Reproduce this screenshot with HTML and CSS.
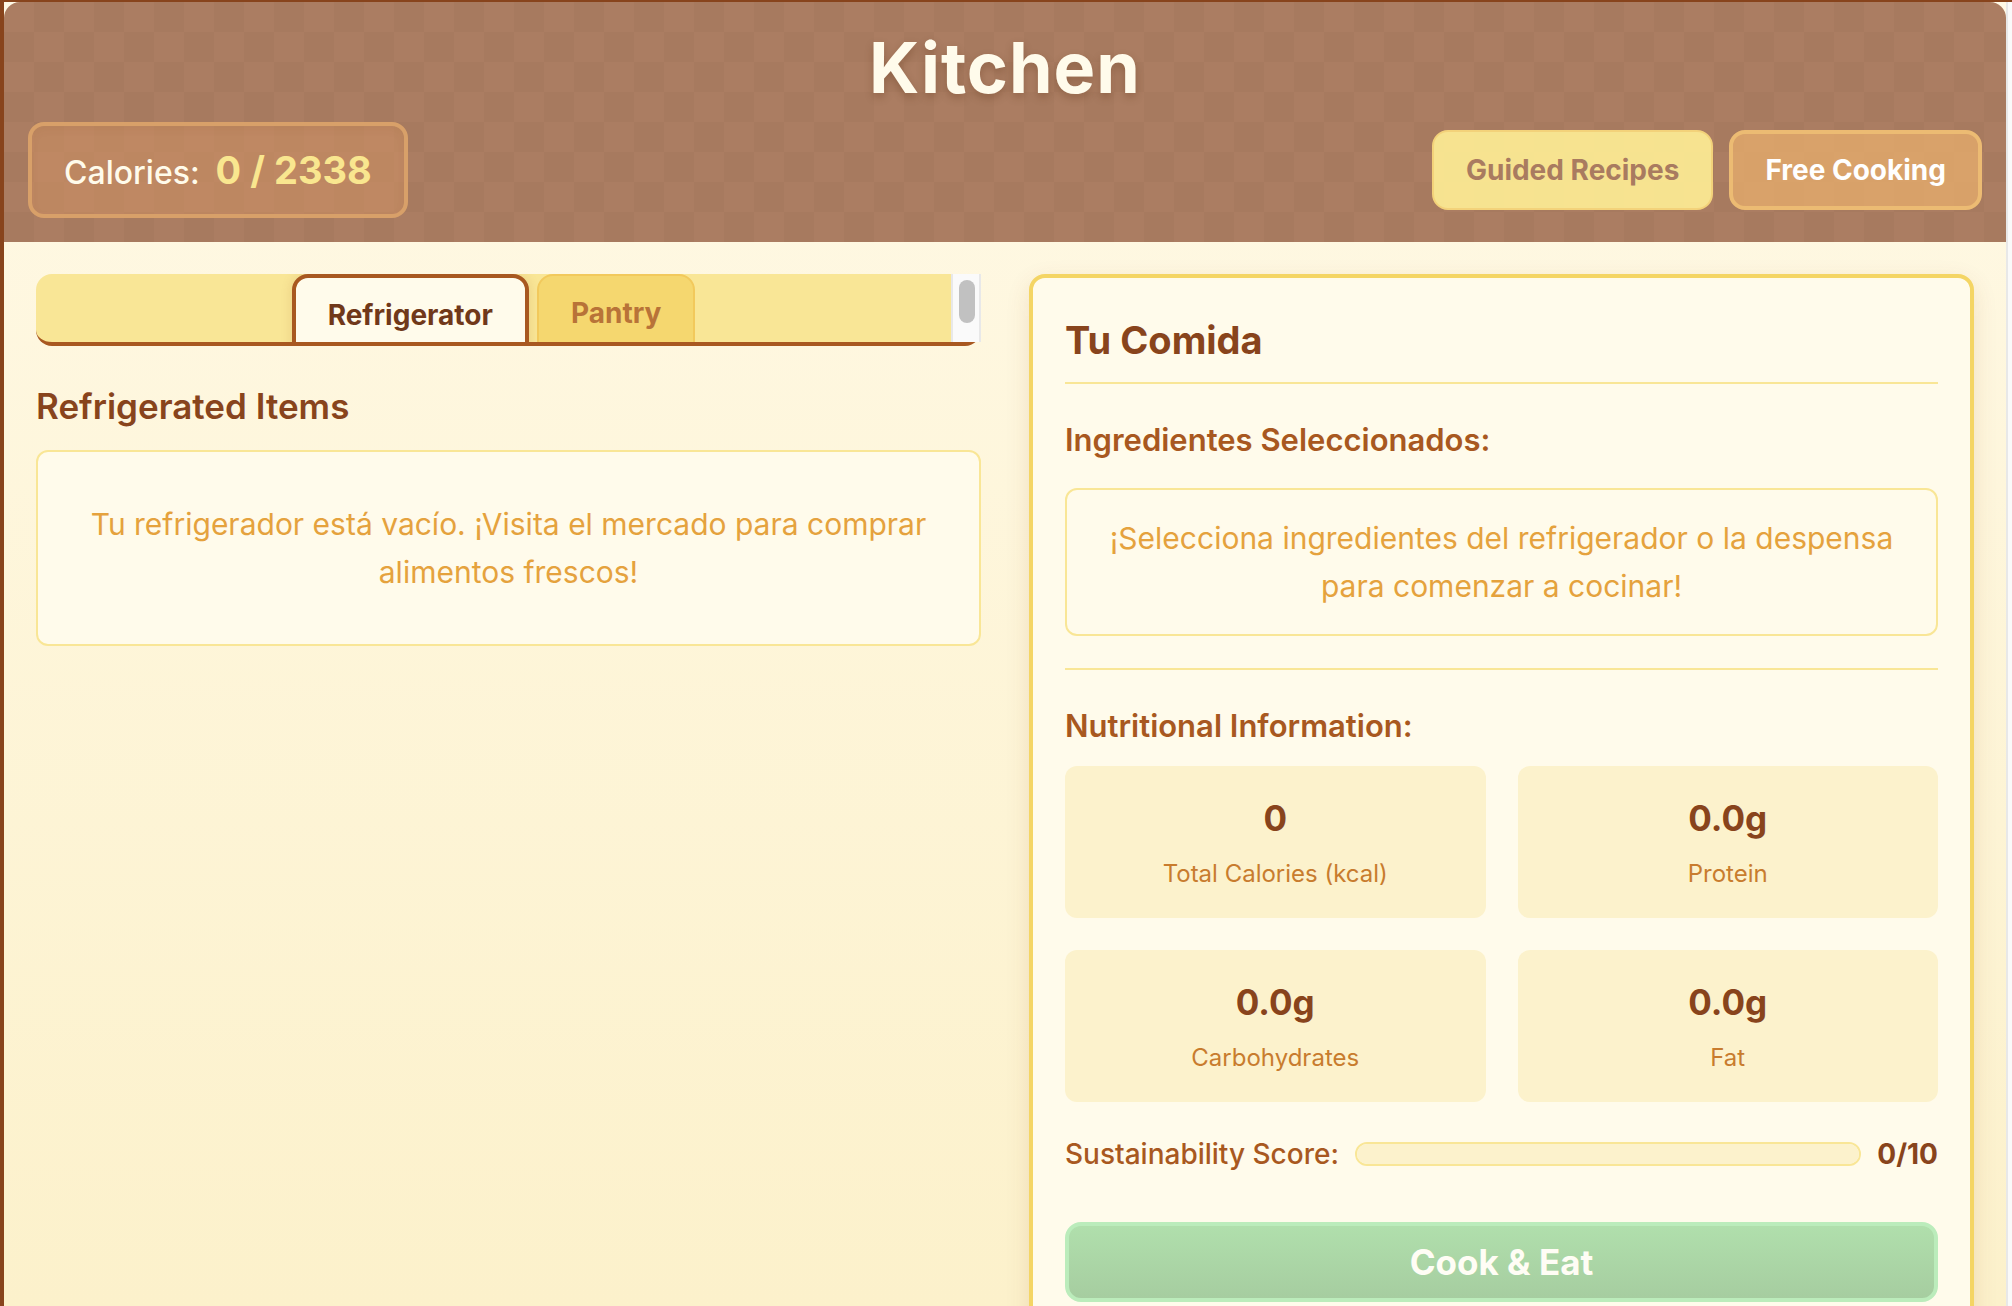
FILE: index.html
```html
<!DOCTYPE html>
<html lang="es">
<head>
<meta charset="utf-8">
<meta name="viewport" content="width=device-width, initial-scale=1">
<title>Kitchen</title>
<link rel="stylesheet" href="styles.css">
</head>
<body>
<div class="shell">
  <div class="kitchen">
    <header class="kitchen-header">
      <h1 class="kitchen-title">Kitchen</h1>
      <div class="header-row">
        <p class="calories"><span>Calories:</span><strong class="calories-value">0 / 2338</strong></p>
        <div class="modes">
          <button type="button" class="mode mode-guided">Guided Recipes</button>
          <button type="button" class="mode mode-free">Free Cooking</button>
        </div>
      </div>
    </header>
    <main class="kitchen-body">
      <section class="storage">
        <div class="tabs">
          <div class="tab-list" role="tablist">
            <button type="button" class="tab tab-active" role="tab" aria-selected="true">Refrigerator</button>
            <button type="button" class="tab" role="tab" aria-selected="false">Pantry</button>
          </div>
          <div class="tab-scroll" aria-hidden="true"><div class="tab-thumb"></div></div>
        </div>
        <h2 class="storage-title">Refrigerated Items</h2>
        <p class="empty empty-large">Tu refrigerador está vacío. ¡Visita el mercado para comprar alimentos frescos!</p>
      </section>
      <section class="meal">
        <h2 class="meal-title">Tu Comida</h2>
        <h3 class="meal-subtitle">Ingredientes Seleccionados:</h3>
        <p class="empty">¡Selecciona ingredientes del refrigerador o la despensa para comenzar a cocinar!</p>
        <div class="nutrition">
          <h3 class="meal-subtitle">Nutritional Information:</h3>
          <dl class="facts">
            <div class="fact"><dd>0</dd><dt>Total Calories (kcal)</dt></div>
            <div class="fact"><dd>0.0g</dd><dt>Protein</dt></div>
            <div class="fact"><dd>0.0g</dd><dt>Carbohydrates</dt></div>
            <div class="fact"><dd>0.0g</dd><dt>Fat</dt></div>
          </dl>
        </div>
        <div class="score">
          <label for="score">Sustainability Score:</label>
          <progress id="score" class="score-bar" value="0" max="10"></progress>
          <strong>0/10</strong>
        </div>
        <button type="button" class="cook">Cook &amp; Eat</button>
      </section>
    </main>
  </div>
  <div class="page-gutter" aria-hidden="true"></div>
</div>
</body>
</html>
```
FILE: styles.css
```css
* {
  box-sizing: border-box;
}

body {
  margin: 0;
  font-family: Inter, "Liberation Sans", sans-serif;
  font-size: 32px;
  line-height: 48px;
  color: #88441c;
}

h1, h2, h3, p, dl, dd {
  margin: 0;
}

button {
  font-family: inherit;
  margin: 0;
  cursor: pointer;
}

.shell {
  display: flex;
  height: 100vh;
  overflow: hidden;
  border-top: 2px solid #88441c;
  border-left: 4px solid #88441c;
  background: linear-gradient(#fff9e6, #fcf1cb);
}

.kitchen {
  flex: 1;
  min-width: 0;
}

.page-gutter {
  width: 6px;
  border-left: 2px solid #e8e8e8;
  background: #fafafa;
}

/* Header with a checkered tile pattern */
.kitchen-header {
  padding: 24px;
  border-radius: 16px 16px 0 0;
  background: repeating-conic-gradient(#a77a5f 0 25%, #ab7d62 0 50%) 0 0 / 60px 60px;
}

.kitchen-title {
  font-size: 70px;
  line-height: 84px;
  font-weight: 700;
  letter-spacing: 1px;
  text-align: center;
  color: #fffbeb;
  text-shadow: 0 4px 8px rgba(90, 45, 15, 0.3);
}

.header-row {
  display: flex;
  align-items: center;
  justify-content: space-between;
  margin-top: 12px;
}

.calories {
  display: flex;
  align-items: baseline;
  gap: 16px;
  padding: 16px 32px;
  border: 4px solid #d8a069;
  border-radius: 16px;
  background: rgba(212, 148, 100, 0.5);
  box-shadow: inset 0 4px 8px rgba(120, 60, 20, 0.06);
  font-weight: 500;
  color: #fffbeb;
}

.calories-value {
  font-size: 38px;
  line-height: 56px;
  font-weight: 700;
  color: #f9e68f;
}

.modes {
  display: flex;
  gap: 16px;
}

.mode {
  height: 80px;
  padding: 0 32px;
  border-radius: 16px;
  font-size: 28px;
  font-weight: 700;
}

.mode-guided {
  border: 2px solid #f3d27a;
  background: rgba(255, 238, 150, 0.9);
  color: #a97b60;
}

.mode-free {
  border: 4px solid #ecbb73;
  background: rgba(236, 178, 110, 0.7);
  color: #fff;
}

/* Two equal columns */
.kitchen-body {
  display: grid;
  grid-template-columns: 1fr 1fr;
  align-items: start;
  gap: 48px;
  padding: 32px;
}

.tabs {
  display: flex;
  border-bottom: 4px solid #a85820;
  border-radius: 16px 0 16px 16px;
  background: #f9e696;
}

.tab-list {
  flex: 1;
  display: flex;
  align-items: flex-start;
  justify-content: center;
  gap: 8px;
  height: 68px;
  overflow: hidden;
}

.tab {
  padding: 16px 32px;
  border: 2px solid #f2c95c;
  border-radius: 16px 16px 0 0;
  background: #f5d76f;
  font-size: 28px;
  line-height: 42px;
  font-weight: 700;
  color: #b87338;
}

.tab-active {
  border: 4px solid #a85820;
  background: #fffbeb;
  color: #70381a;
  box-shadow: 0 0 12px rgba(139, 69, 19, 0.15);
}

.tab-scroll {
  width: 30px;
  padding: 6px;
  border: solid #e8e8e8;
  border-width: 0 2px;
  background: #fafafa;
}

.tab-thumb {
  width: 16px;
  height: 43px;
  margin: 0 auto;
  border-radius: 8px;
  background: #c1c1c1;
}

.storage-title {
  margin: 32px 0 16px;
  font-size: 35px;
  line-height: 56px;
  font-weight: 600;
}

.empty {
  padding: 24px;
  border: 2px solid #f9e696;
  border-radius: 12px;
  background: #fffbeb;
  font-size: 30px;
  color: #e5a23d;
  text-align: center;
}

.empty-large {
  padding: 48px 40px;
}

.meal {
  padding: 32px;
  border: 4px solid #f4d564;
  border-radius: 16px;
  background: #fffbeb;
  box-shadow: 0 8px 24px rgba(139, 69, 19, 0.12);
}

.meal-title {
  padding-bottom: 12px;
  border-bottom: 2px solid #f9e696;
  font-size: 38px;
  line-height: 60px;
  font-weight: 700;
}

.meal-subtitle {
  margin: 32px 0 24px;
  font-size: 31px;
  line-height: 48px;
  font-weight: 600;
  color: #a85820;
}

.nutrition {
  margin-top: 32px;
  border-top: 2px solid #f9e696;
}

.nutrition .meal-subtitle {
  margin-bottom: 16px;
}

.facts {
  display: grid;
  grid-template-columns: 1fr 1fr;
  gap: 32px;
}

.fact {
  padding: 24px;
  border-radius: 12px;
  background: #fcf2cc;
  text-align: center;
}

.fact dd {
  font-size: 35px;
  line-height: 56px;
  font-weight: 700;
}

.fact dt {
  margin-top: 8px;
  font-size: 24px;
  line-height: 40px;
  color: #c87c2e;
}

.score {
  display: flex;
  align-items: center;
  gap: 16px;
  margin: 32px 0 48px;
  font-size: 28px;
  line-height: 40px;
}

.score label {
  font-weight: 500;
  color: #a85820;
}

.score-bar {
  appearance: none;
  flex: 1;
  min-width: 0;
  height: 24px;
  border: 2px solid #f9e696;
  border-radius: 12px;
  background: #fcf2cc;
  overflow: hidden;
}

.score-bar::-webkit-progress-bar {
  background: #fcf2cc;
}

.score-bar::-webkit-progress-value {
  background: #7cc57c;
}

.cook {
  display: block;
  width: 100%;
  height: 80px;
  border: 4px solid #bbecbb;
  border-radius: 16px;
  background: linear-gradient(#b0dfac, #a6cda0);
  font-size: 35px;
  font-weight: 700;
  color: #fffdf5;
}
```
